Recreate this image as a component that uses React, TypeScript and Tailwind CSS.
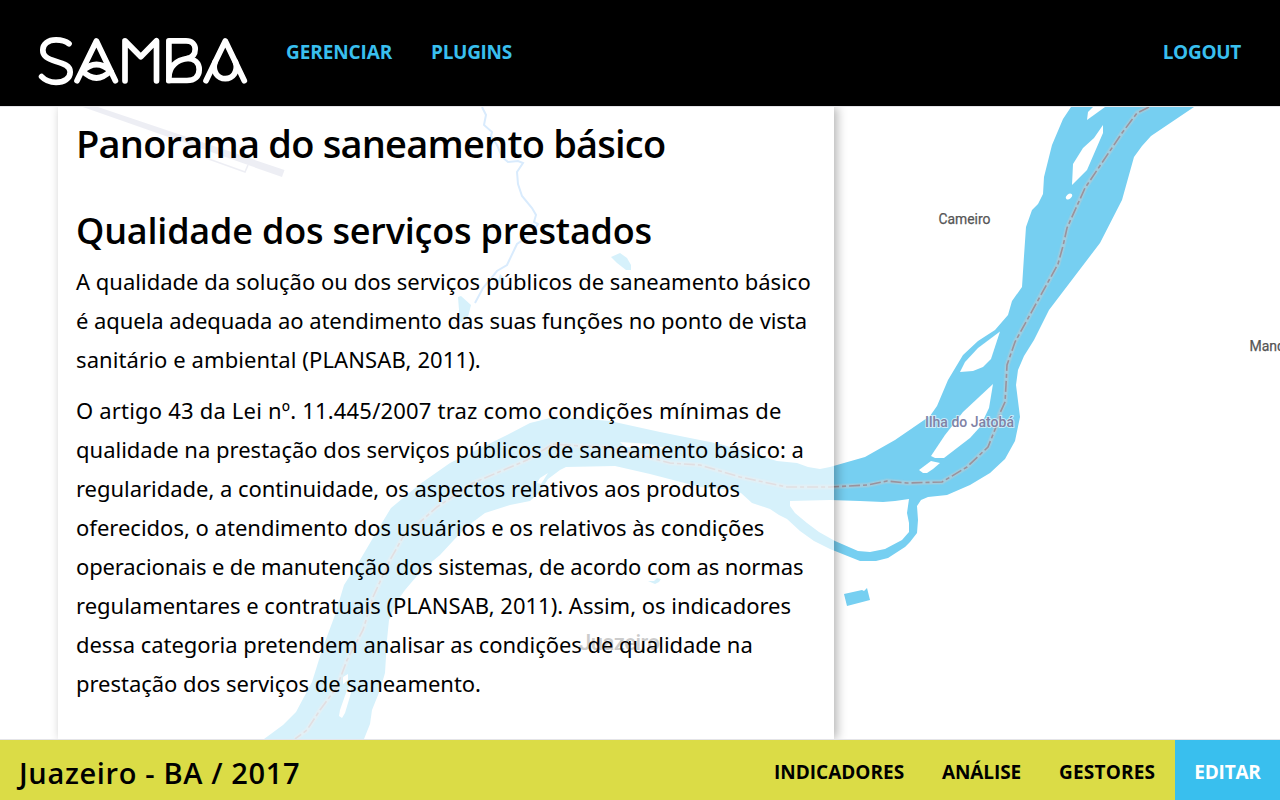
type LineSpec = { text: string; tracking: string };

const intro: LineSpec[] = [
  { text: "A qualidade da solução ou dos serviços públicos de saneamento básico", tracking: "tracking-[0.01px]" },
  { text: "é aquela adequada ao atendimento das suas funções no ponto de vista", tracking: "tracking-[-0.06px]" },
  { text: "sanitário e ambiental (PLANSAB, 2011).", tracking: "tracking-[0.1px]" },
];

const detail: LineSpec[] = [
  { text: "O artigo 43 da Lei nº. 11.445/2007 traz como condições mínimas de", tracking: "tracking-[0.19px]" },
  { text: "qualidade na prestação dos serviços públicos de saneamento básico: a", tracking: "tracking-[0px]" },
  { text: "regularidade, a continuidade, os aspectos relativos aos produtos", tracking: "tracking-[-0.03px]" },
  { text: "oferecidos, o atendimento dos usuários e os relativos às condições", tracking: "tracking-[0px]" },
  { text: "operacionais e de manutenção dos sistemas, de acordo com as normas", tracking: "tracking-[-0.13px]" },
  { text: "regulamentares e contratuais (PLANSAB, 2011). Assim, os indicadores", tracking: "tracking-[-0.01px]" },
  { text: "dessa categoria pretendem analisar as condições de qualidade na", tracking: "tracking-[-0.05px]" },
  { text: "prestação dos serviços de saneamento.", tracking: "tracking-[-0.03px]" },
];

function Paragraph({ lines, className = "" }: { lines: LineSpec[]; className?: string }) {
  return (
    <p className={`whitespace-nowrap font-['Noto_Sans',sans-serif] text-[22px] leading-[39px] ${className}`}>
      {lines.map((line) => (
        <span key={line.text} className={`block ${line.tracking}`}>
          {line.text}
        </span>
      ))}
    </p>
  );
}

function Logo() {
  return (
    <svg
      className="h-[52px] w-[212px] shrink-0"
      viewBox="37 35 212 52"
      fill="none"
      stroke="#fff"
      strokeWidth="5.7"
      strokeLinecap="round"
      strokeLinejoin="round"
      role="img"
      aria-label="SAMBA"
    >
      <path d="M69 43.7C65.5 40.8 61 39.8 56 39.8C48 39.8 42.8 44 42.8 50C42.8 56 47 58.7 55.5 61.2C64 63.7 70.2 66 70.2 72C70.2 78.5 64 82.3 56 82.3C50 82.3 45 80.3 41.6 76.6" />
      <path d="M77 80.8L96.4 41L115.4 80.8" />
      <path d="M82.5 71Q96.5 58 110.5 71" />
      <path d="M82.5 71Q96.5 84.8 110.5 71" />
      <path d="M125 80.8V40.8L140.8 56.8L156.5 40.8V80.8" />
      <path d="M168.9 80.5V40.8H186C192 40.8 195.2 44.5 195.2 49C195.2 54.5 192.5 57.5 187 58.5C176.5 60 169 67 169 77" />
      <path d="M187 58.5C194.5 58.5 199.2 63 199.2 69.5C199.2 76.5 194.5 80.5 187 80.5H168.9" />
      <path d="M206 80.8L225.3 41L244.3 80.8" />
      <path d="M215 62C212 72 218 78.6 225.3 78.6C232.5 78.6 238.5 72 235.5 62" />
    </svg>
  );
}

const centerLine =
  "M1149 107L1137 113L1122 133L1085 188L1067 228L1063 246L1058 264L1037 302L1015 342L1007 365L1006 385L1005 402L1000 413L996 427L988 447L967 467L942 482L907 483L887 481L868 485L830 487H787L740 477L700 465L670 463L640 455L607 447L580 446L553 444L527 460L473 483L437 507L403 537L390 560L373 597L363 630L347 660L337 687L320 710L307 730L295 739";

function RiverMap() {
  return (
    <svg className="absolute inset-0 h-full w-full" viewBox="0 107 1280 632" preserveAspectRatio="none">
      <path d="M80 106H95L284.500 170L282 177Z" fill="#c3c6da" />
      <path d="M206 158L245 172L248 165" fill="none" stroke="#c3c6da" strokeWidth="1.6" />
      <path
        d="M482 107L486 115L484 125L492 132L491 136L497 145L502 157L508 162L518 161L523 163L517 172L518 184L522 196L532 208L536 215L534 222L538 224L530 235L517 244L507 265L497 271L483 288L475 303"
        fill="none"
        stroke="#7fbdf7"
        strokeWidth="2"
      />
      <g fill="#76cff1">
        <path d="M611 257L620 253L627 258L631 265V270H626L617 263Z" />
        <path d="M458 297L461 296L471 305L468 317L460 323Z" />
        <path d="M498 281L500 274L505 279L502 285Z" />
        <path d="M648 581L654 581L657 578L661 579L659 582L655 584Z" />
        <path d="M844 594L862 590L864 591L867 588L868 592L870 600L847 606Z" />
        <path
          fillRule="evenodd"
          d="M1071 107L1063 119L1052 145L1044 177L1043 194L1038 204L1032 210L1026 227L1024 256L1022 287L1012 301L1008 315L995 330L978 341L963 355L948 380L937 406L930 416L895 440L865 457L830 467L820 469L808 467L797 463L777 461L760 456L720 444L660 432L610 421L575 418H550L530 423L505 436L450 463L420 484L391 508L380 526L360 560L344 585L335 615L322 650L312 682L296 712L283 725L264 739H364L370 724L372 710L380 690L385 673L387 640L389 620L398 600L405 590L422 570L440 555L465 528L485 513L510 505L530 501L540 492L548 479L560 470L566 467L615 466L650 474L700 487L732 490L741 493L752 503L770 509L779 515L787 519L800 531L814 541L830 549L860 561H876L888 558L905 547L910 542L917 533L918 520L917 506L921 500L928 497L947 495L970 485L990 473L1005 459L1015 441L1020 417L1017 393L1016 385L1018 370L1024 356L1034 340L1049 310L1100 243L1122 200L1134 157L1142 146L1151 136L1194 107Z
          M790 501V506L795 513L807 523L819 532L835 541L858 551L870 552L885 549L902 540L909 532V523L907 513L909 499L895 501L883 502L860 501L830 500Z"
        />
      </g>
      <g fill="#fff">
        <path d="M1093 107L1088 112L1087 120L1105 107Z" />
        <path d="M1103 125V133L1087 170L1072 185L1073 164L1083 148L1094 138Z" />
        <ellipse cx="1069" cy="196.500" rx="3.600" ry="2.300" transform="rotate(-42 1069 196.500)" />
        <path d="M1000 331.500L991 359L983 367L973 371L960 372L965 362L978 348Z" />
        <path d="M993 384L989 408L980 427L970 438L944 458H935L931 456L945 435L963 412Z" />
        <path d="M931 461L940 463L933 469L927 473H923L919 470Z" />
        <path d="M620 442L650 444L668 449L625 447Z" />
        <path d="M548 473L540 478L537 483L541 484Z" />
        <path d="M347 690L340 710L339 716L342 718L345 713L351 693V684Z" />
        <path d="M343 677L348 674V680L343 684Z" />
      </g>
      <path d={centerLine} fill="none" stroke="#b3cbd7" strokeOpacity="0.35" strokeWidth="5.5" />
      <path d={centerLine} fill="none" stroke="#b3cbd7" strokeOpacity="0.6" strokeWidth="3.4" />
      <path d={centerLine} fill="none" stroke="#9a929c" strokeWidth="1.6" strokeDasharray="11 3 4 3" />
      <g fontFamily="Roboto, sans-serif" strokeLinejoin="round" paintOrder="stroke">
        <text x="938.500" y="223.500" fontSize="14" fill="#555" stroke="#555" strokeWidth="0.250" textLength="52" lengthAdjust="spacingAndGlyphs">
          Cameiro
        </text>
        <text x="1249.500" y="350.500" fontSize="14" fill="#555" stroke="#555" strokeWidth="0.250">
          Mandacaru
        </text>
        <text x="925" y="426.500" fontSize="14" fontWeight="500" fill="#8082a5" stroke="#fff" strokeOpacity="0.6" strokeWidth="2" textLength="89">
          Ilha do Jatobá
        </text>
        <text x="579" y="650" fontSize="22" fontWeight="500" fill="#555" textLength="81">
          Juazeiro
        </text>
      </g>
    </svg>
  );
}

export default function App() {
  return (
    <div className="flex h-[800px] w-[1280px] flex-col overflow-hidden bg-white font-['Open_Sans',sans-serif] text-black">
      <header className="flex h-[106px] shrink-0 items-center bg-black pr-[39px] pl-[37px] pt-[15px] text-[19px] font-bold text-[#39bfee]">
        <Logo />
        <nav className="-mt-[17px] flex flex-1 items-center pl-[37px] leading-7">
          <a className="w-[145px] tracking-[-0.1px]">GERENCIAR</a>
          <a className="tracking-[-0.3px]">PLUGINS</a>
          <a className="ml-auto tracking-[-0.3px]">LOGOUT</a>
        </nav>
      </header>

      <main className="relative h-[634px] shrink-0 overflow-hidden border-y border-[#e4e4e8] pl-[58px]">
        <RiverMap />
        <article className="relative h-full w-[776px] bg-white/70 pt-[14px] pl-[18px] shadow-[3px_0_10px_rgba(0,0,0,0.3)]">
          <h1 className="text-[38px] leading-[44px] font-semibold tracking-[-0.78px] whitespace-nowrap">
            Panorama do saneamento básico
          </h1>
          <h2 className="mt-[44px] text-[36px] leading-[44px] font-semibold tracking-[-0.2px] whitespace-nowrap">
            Qualidade dos serviços prestados
          </h2>
          <Paragraph lines={intro} className="mt-[9px]" />
          <Paragraph lines={detail} className="mt-3" />
        </article>
      </main>

      <footer className="flex h-[60px] shrink-0 items-stretch bg-[#dbdc46]">
        <h3 className="flex items-center pt-[5px] pl-[19px] text-[29px] font-semibold tracking-[0.65px]">
          Juazeiro - BA / 2017
        </h3>
        <nav className="ml-auto flex items-stretch text-[19px] font-bold">
          <a className="flex w-[168px] items-center pt-[5px]">INDICADORES</a>
          <a className="flex w-[117px] items-center pt-[5px] tracking-[-0.1px]">ANÁLISE</a>
          <a className="flex w-[116px] items-center pt-[5px] tracking-[0.2px]">GESTORES</a>
          <a className="flex w-[105px] items-center justify-center bg-[#39bfee] pt-[5px] tracking-[-0.2px] text-white">
            EDITAR
          </a>
        </nav>
      </footer>
    </div>
  );
}
